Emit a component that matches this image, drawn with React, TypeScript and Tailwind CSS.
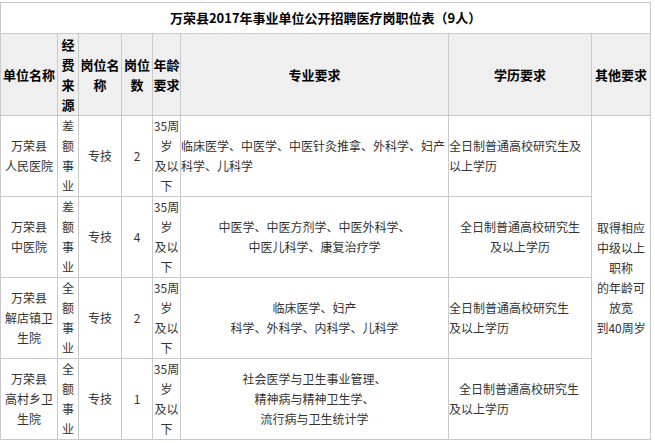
const font = { fontFamily: '"Noto Sans CJK SC", "Noto Sans", sans-serif' };

const cell = 'border border-[#c9c9c9] p-0 align-middle';
const head = `${cell} bg-[#efefef] font-bold text-black text-[13px] leading-[20px] text-center`;
const body = `${cell} text-[#333] text-[12px] leading-[20px] text-center`;

type Row = {
  unit: string[];
  fund: string;
  post: string;
  count: string;
  major: string[];
  majorAlign: 'left' | 'center';
  edu: string[];
  eduAlign: 'left' | 'center';
  eduIndent?: boolean;
  h: string;
};

const rows: Row[] = [
  {
    unit: ['万荣县', '人民医院'],
    fund: '差额事业',
    post: '专技',
    count: '2',
    major: ['临床医学、中医学、中医针灸推拿、外科学、妇产', '科学、儿科学'],
    majorAlign: 'left',
    edu: ['全日制普通高校研究生及', '以上学历'],
    eduAlign: 'left',
    h: 'h-[80px]',
  },
  {
    unit: ['万荣县', '中医院'],
    fund: '差额事业',
    post: '专技',
    count: '4',
    major: ['中医学、中医方剂学、中医外科学、', '中医儿科学、康复治疗学'],
    majorAlign: 'center',
    edu: ['全日制普通高校研究生', '及以上学历'],
    eduAlign: 'center',
    h: 'h-[80px]',
  },
  {
    unit: ['万荣县', '解店镇卫', '生院'],
    fund: '全额事业',
    post: '专技',
    count: '2',
    major: ['临床医学、妇产', '科学、外科学、内科学、儿科学'],
    majorAlign: 'center',
    edu: ['全日制普通高校研究生', '及以上学历'],
    eduAlign: 'left',
    h: 'h-[81px]',
  },
  {
    unit: ['万荣县', '高村乡卫', '生院'],
    fund: '全额事业',
    post: '专技',
    count: '1',
    major: ['社会医学与卫生事业管理、', '精神病与精神卫生学、', '流行病与卫生统计学'],
    majorAlign: 'center',
    edu: ['全日制普通高校研究生', '及以上学历'],
    eduAlign: 'left',
    eduIndent: true,
    h: 'h-[80px]',
  },
];

function Lines({ items }: { items: string[] }) {
  return (
    <>
      {items.map((t, i) => (
        <div key={i}>{t}</div>
      ))}
    </>
  );
}

export default function App() {
  return (
    <div className="w-[655px] h-[443px] bg-white pt-[2px]" style={font}>
      <table className="table-fixed border-collapse w-[650px]">
        <colgroup>
          <col className="w-[57px]" />
          <col className="w-[21px]" />
          <col className="w-[43px]" />
          <col className="w-[31px]" />
          <col className="w-[28px]" />
          <col className="w-[268px]" />
          <col className="w-[143px]" />
          <col className="w-[59px]" />
        </colgroup>
        <tbody>
          <tr>
            <td colSpan={8} className={`${cell} h-[31px] bg-white text-center font-bold text-[13px] text-black`}>
              万荣县2017年事业单位公开招聘医疗岗职位表（9人）
            </td>
          </tr>
          <tr>
            <td className={`${head} h-[82px]`}>单位名称</td>
            <td className={head}>
              <Lines items={['经', '费', '来', '源']} />
            </td>
            <td className={head}>
              <Lines items={['岗位名', '称']} />
            </td>
            <td className={head}>
              <Lines items={['岗位', '数']} />
            </td>
            <td className={head}>
              <Lines items={['年龄', '要求']} />
            </td>
            <td className={head}>专业要求</td>
            <td className={head}>学历要求</td>
            <td className={head}>其他要求</td>
          </tr>
          {rows.map((r, i) => (
            <tr key={i}>
              <td className={`${body} ${r.h}`}>
                <Lines items={r.unit} />
              </td>
              <td className={body}>
                <Lines items={r.fund.split('')} />
              </td>
              <td className={body}>{r.post}</td>
              <td className={body}>{r.count}</td>
              <td className={body}>
                <Lines items={['35周', '岁', '及以', '下']} />
              </td>
              <td className={`${body} ${r.majorAlign === 'left' ? 'text-left' : 'text-center'}`}>
                <Lines items={r.major} />
              </td>
              <td className={`${body} ${r.eduAlign === 'left' ? 'text-left' : 'text-center'}`}>
                {r.eduIndent ? (
                  <>
                    <div className="pl-[10px]">{r.edu[0]}</div>
                    <div>{r.edu[1]}</div>
                  </>
                ) : (
                  <Lines items={r.edu} />
                )}
              </td>
              {i === 0 && (
                <td rowSpan={4} className={`${body} leading-[19.5px]`}>
                  <Lines items={['取得相应', '中级以上', '职称', '的年龄可', '放宽', '到40周岁']} />
                </td>
              )}
            </tr>
          ))}
        </tbody>
      </table>
    </div>
  );
}
